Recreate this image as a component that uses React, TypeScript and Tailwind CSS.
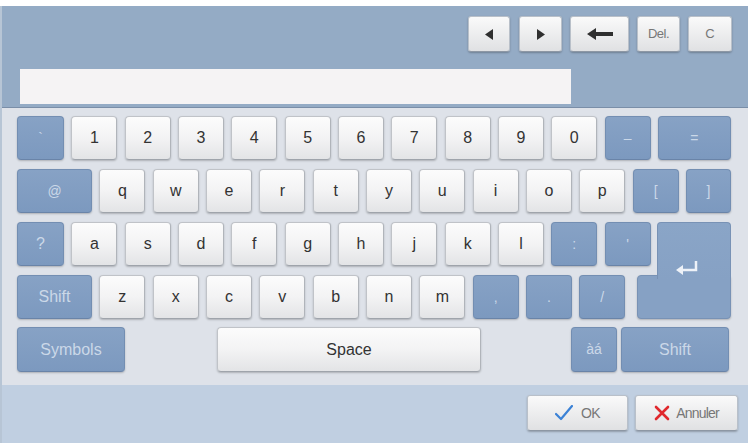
import React from 'react';

const font = { fontFamily: '"Liberation Sans", Arial, sans-serif' };

const white =
  'flex items-center justify-center rounded-[4px] border border-[#c0c3c8] border-b-[#9fa4ab] border-r-[#b0b4ba] bg-gradient-to-b from-[#fcfcfc] via-[#f3f3f4] to-[#e3e4e6] text-[16px] text-[#333] shadow-[0_1px_2px_rgba(0,0,0,0.22)] shrink-0';
const blue =
  'flex items-center justify-center rounded-[4px] border border-[#738eb2] border-b-[#6a84a8] bg-gradient-to-b from-[#87a2c5] to-[#7c99bf] text-[14px] text-[#cbd8e8] shadow-[0_1px_2px_rgba(0,0,0,0.22)] shrink-0';
const tool =
  'flex items-center justify-center h-[36px] rounded-[3px] border border-[#b9c0c9] border-b-[#8d97a4] bg-gradient-to-b from-[#fafafa] to-[#e0e1e3] text-[13px] text-[#777] shadow-[0_1px_2px_rgba(0,0,0,0.25)]';

function W({ label, w = 'w-[46px]' }: { label: string; w?: string }) {
  return <div className={`${white} ${w} h-[44px]`}>{label}</div>;
}

function B({ label, w = 'w-[46px]', cls = '' }: { label: string; w?: string; cls?: string }) {
  return <div className={`${blue} ${w} h-[44px] ${cls}`}>{label}</div>;
}

export default function App() {
  const digits = ['1', '2', '3', '4', '5', '6', '7', '8', '9', '0'];
  const r2 = ['q', 'w', 'e', 'r', 't', 'y', 'u', 'i', 'o', 'p'];
  const r3 = ['a', 's', 'd', 'f', 'g', 'h', 'j', 'k', 'l'];
  const r4 = ['z', 'x', 'c', 'v', 'b', 'n', 'm'];

  return (
    <div className="w-[748px] h-[443px] bg-white pt-[6px] overflow-hidden" style={font}>
      <div className="h-[437px] flex flex-col border-l-[2px] border-[#b7c5d5]">
        {/* header */}
        <div className="h-[102px] bg-[#94abc5] border-b border-[#7a8ea8] flex flex-col">
          <div className="flex justify-end gap-[8px] pt-[10px] pr-[16px]">
            <div className={`${tool} w-[42px]`}>
              <svg width="8" height="11" viewBox="0 0 8 11">
                <path d="M8 0 L0 5.5 L8 11 Z" fill="#2f2f2f" />
              </svg>
            </div>
            <div className={`${tool} w-[43px] ml-[1px]`}>
              <svg width="8" height="11" viewBox="0 0 8 11">
                <path d="M0 0 L8 5.5 L0 11 Z" fill="#2f2f2f" />
              </svg>
            </div>
            <div className={`${tool} w-[59px]`}>
              <svg width="26" height="12" viewBox="0 0 26 12">
                <path d="M0 6 L9 0 L9 4 L26 4 L26 8 L9 8 L9 12 Z" fill="#2f2f2f" />
              </svg>
            </div>
            <div className={`${tool} w-[43px] tracking-[-0.5px]`}>Del.</div>
            <div className={`${tool} w-[44px]`}>C</div>
          </div>
          <div className="mt-[17px] ml-[18px] w-[551px] h-[35px] bg-[#f5f3f4]" />
        </div>

        {/* keyboard */}
        <div className="h-[277px] bg-[#dee2e9] pl-[15px] pt-[8px] flex flex-col gap-[9px]">
          <div className="flex gap-[7.33px]">
            <B label="`" w="w-[47px]" />
            {digits.map((d) => (
              <W key={d} label={d} />
            ))}
            <B label="–" />
            <B label="=" w="w-[73px]" />
          </div>
          <div className="flex gap-[7.33px]">
            <B label="@" w="w-[75px]" />
            {r2.map((d) => (
              <W key={d} label={d} />
            ))}
            <B label="[" />
            <B label="]" w="w-[45px]" />
          </div>
          <div className="flex gap-[7.33px] items-start">
            <B label="?" w="w-[47px]" cls="text-[16px]" />
            {r3.map((d) => (
              <W key={d} label={d} />
            ))}
            <B label=":" />
            <B label="'" />
            <div className="relative z-10 -ml-[1px] w-[74px] h-[57px] -mb-[13px] rounded-t-[4px] border border-b-0 border-[#7892b5] bg-gradient-to-b from-[#8aa5c7] to-[#86a1c4]" />
          </div>
          <div className="flex gap-[7.33px]">
            <B label="Shift" w="w-[75px]" cls="text-[16px]" />
            {r4.map((d) => (
              <W key={d} label={d} />
            ))}
            <B label="," />
            <B label="." />
            <B label="/" />
            <div className="relative ml-[4px] w-[94px] h-[44px] rounded-[4px] border border-[#7892b5] bg-[#86a1c4] shadow-[0_1px_2px_rgba(0,0,0,0.22)]">
              <svg className="absolute z-20 left-[38px] -top-[16px]" width="22" height="16" viewBox="0 0 22 16">
                <path d="M20 1 V10 H5" stroke="#eef2f8" strokeWidth="2.5" fill="none" />
                <path d="M0 10 L7 5 L7 15 Z" fill="#eef2f8" />
              </svg>
            </div>
          </div>
          <div className="flex items-start -mt-[1px]">
            <div className={`${blue} w-[108px] h-[45px] text-[16px]`}>Symbols</div>
            <div className={`${white} ml-[92px] w-[264px] h-[45px] text-[16px] text-[#222]`}>Space</div>
            <div className={`${blue} ml-[90px] w-[46px] h-[45px] text-[14px]`}>àá</div>
            <div className={`${blue} ml-[4px] w-[108px] h-[45px] text-[16px]`}>Shift</div>
          </div>
        </div>

        {/* bottom */}
        <div className="flex-1 bg-[#c0cfe1] flex justify-end items-start gap-[7px] pt-[10px] pr-[10px]">
          <div className={`${tool} w-[101px] h-[34px] gap-[8px] text-[14px] text-[#555]`}>
            <svg width="18" height="16" viewBox="0 0 18 16">
              <path d="M1 9 L6 14 L17 1" stroke="#3b82d6" strokeWidth="2.2" fill="none" strokeLinecap="round" strokeLinejoin="round" />
            </svg>
            <span className="tracking-[-0.5px]">OK</span>
          </div>
          <div className={`${tool} w-[103px] h-[34px] gap-[6px] text-[14px] text-[#555]`}>
            <svg width="16" height="16" viewBox="0 0 16 16">
              <path d="M2 2 L14 14 M14 2 L2 14" stroke="#e0282d" strokeWidth="2.6" strokeLinecap="round" />
            </svg>
            <span className="tracking-[-0.8px]">Annuler</span>
          </div>
        </div>
      </div>
    </div>
  );
}
